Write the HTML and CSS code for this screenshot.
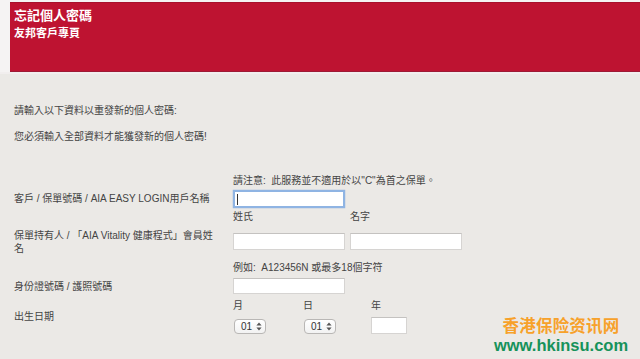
FILE: index.html
```html
<!DOCTYPE html>
<html lang="zh-Hant">
<head>
<meta charset="utf-8">
<title>忘記個人密碼</title>
<link rel="stylesheet" href="styles.css">
</head>
<body>
<div class="top">
  <header class="banner">
    <div class="title">忘記個人密碼</div>
    <div class="subtitle">友邦客戶專頁</div>
  </header>
</div>
<main class="main">
  <p class="intro first">請輸入以下資料以重發新的個人密碼:</p>
  <p class="intro second">您必須輸入全部資料才能獲發新的個人密碼!</p>

  <div class="row note-row">
    <div class="label"></div>
    <div class="hint">請注意:&nbsp; 此服務並不適用於以"C"為首之保單。</div>
  </div>
  <div class="row r-login">
    <div class="label lh18">客戶 / 保單號碼 / AIA EASY LOGIN用戶名稱</div>
    <div class="field"><span class="input focus"><span class="caret"></span></span></div>
  </div>
  <div class="row r-sub1">
    <div class="label"></div>
    <div class="pair"><span class="cell">姓氏</span><span class="cell">名字</span></div>
  </div>
  <div class="row r-name">
    <div class="label two">保單持有人 / 「AIA Vitality 健康程式」會員姓名</div>
    <div class="pair"><span class="input"></span><span class="input"></span></div>
  </div>
  <div class="row r-sub2">
    <div class="label"></div>
    <div class="hint">例如:&nbsp; A123456N 或最多18個字符</div>
  </div>
  <div class="row r-id">
    <div class="label lh17">身份證號碼 / 護照號碼</div>
    <div class="field"><span class="input h16"></span></div>
  </div>
  <div class="row r-sub3">
    <div class="label"></div>
    <div class="dates"><span class="d1">月</span><span class="d2">日</span><span class="d3">年</span></div>
  </div>
  <div class="row r-dob">
    <div class="label dob">出生日期</div>
    <div class="dates">
      <span class="d1"><span class="select">01<svg width="6" height="9" viewBox="0 0 6 9"><path d="M3 0.5 L5.6 3.6 H0.4 Z M3 8.5 L5.6 5.4 H0.4 Z" fill="#555"/></svg></span></span>
      <span class="d2"><span class="select">01<svg width="6" height="9" viewBox="0 0 6 9"><path d="M3 0.5 L5.6 3.6 H0.4 Z M3 8.5 L5.6 5.4 H0.4 Z" fill="#555"/></svg></span></span>
      <span class="d3"><span class="input year"></span></span>
    </div>
  </div>
</main>
<div class="watermark">
  <div class="wm-cn">香港保险资讯网</div>
  <div class="wm-url">www.hkinsu.com</div>
</div>
</body>
</html>
```
FILE: styles.css
```css
html, body {
  margin: 0;
  padding: 0;
}
body {
  background: #ebe9e6;
  font-family: "Liberation Sans", "Noto Sans CJK TC", sans-serif;
  color: #444444;
  width: 640px;
  height: 359px;
  overflow: hidden;
  position: relative;
}
.top {
  background: #f5f3f3;
  padding-top: 2px;
  border-bottom: 2px solid #f1eeee;
}
.banner {
  margin-left: 10px;
  height: 58px;
  padding: 5px 4px;
  background: #be1331;
  border-top: 1px solid #a8112c;
  border-bottom: 1px solid #9d1a35;
  color: #ffffff;
}
.title {
  font-size: 13px;
  line-height: 16px;
  font-weight: bold;
}
.subtitle {
  margin-top: 2px;
  font-size: 11px;
  line-height: 14px;
  font-weight: bold;
}
.main {
  padding-left: 14px;
}
.intro {
  margin: 0;
  font-size: 10px;
  line-height: 14px;
}
.intro.first {
  margin-top: 30px;
}
.intro.second {
  margin-top: 12px;
}
.row {
  display: flex;
  align-items: flex-start;
  font-size: 10px;
}
.label {
  width: 219px;
  flex: none;
  line-height: 14px;
  padding-right: 16px;
  box-sizing: border-box;
}
.lh18 { line-height: 18px; }
.lh17 { line-height: 17px; }
.label.two {
  line-height: 13px;
  margin-top: -4px;
}
.label.dob {
  margin-top: -7px;
}
.hint {
  line-height: 14px;
}
.note-row { margin-top: 30px; }
.r-login { margin-top: 2px; }
.r-sub1 { margin-top: 2px; line-height: 14px; }
.r-name { margin-top: 9px; }
.r-sub2 { margin-top: 6px; }
.r-id { margin-top: 3px; }
.r-sub3 { margin-top: 4px; line-height: 14px; }
.r-dob { margin-top: 4px; }
.pair {
  display: flex;
  gap: 5px;
  line-height: 14px;
}
.cell {
  width: 112px;
}
.input {
  display: block;
  width: 112px;
  height: 17px;
  box-sizing: border-box;
  background: #ffffff;
  border: 1px solid #d6d4d2;
  border-top-color: #c4c2c0;
}
.input.h16 { height: 16px; }
.input.focus {
  height: 18px;
  border: 2px solid #8fb4e3;
  box-shadow: 0 0 1px #6f9fd8;
  display: flex;
  align-items: center;
  padding-left: 2px;
}
.caret {
  width: 1px;
  height: 11px;
  background: #333;
}
.dates {
  display: flex;
  line-height: 14px;
}
.d1 { width: 70px; }
.d2 { width: 68px; }
.d3 { width: 40px; }
.select {
  display: flex;
  align-items: center;
  justify-content: space-between;
  margin-top: 2px;
  margin-left: 1px;
  width: 32px;
  height: 15px;
  box-sizing: border-box;
  padding: 0 3px 0 6px;
  background: linear-gradient(#ffffff, #f2f2f2);
  border: 1px solid #b9b7b5;
  border-radius: 4px;
  font-size: 10px;
  color: #333;
}
.input.year {
  width: 36px;
  height: 17px;
}
.watermark {
  position: absolute;
  left: 493px;
  top: 314px;
  text-align: center;
  width: 136px;
}
.wm-cn {
  font-family: "Noto Sans CJK SC", sans-serif;
  font-weight: bold;
  font-size: 16.5px;
  line-height: 22px;
  color: #f7a12a;
  letter-spacing: 0.2px;
}
.wm-url {
  font-family: "Liberation Sans", sans-serif;
  font-weight: bold;
  font-size: 16.5px;
  line-height: 19px;
  color: #16925a;
}
```
